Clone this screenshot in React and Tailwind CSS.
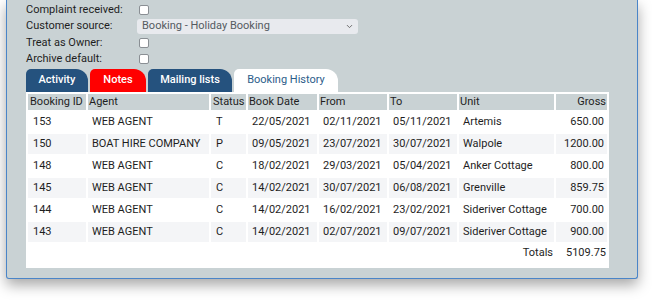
import { ChevronDown } from 'lucide-react';

const rows = [
  { id: '153', agent: 'WEB AGENT', status: 'T', booked: '22/05/2021', from: '02/11/2021', to: '05/11/2021', unit: 'Artemis', gross: '650.00' },
  { id: '150', agent: 'BOAT HIRE COMPANY', status: 'P', booked: '09/05/2021', from: '23/07/2021', to: '30/07/2021', unit: 'Walpole', gross: '1200.00' },
  { id: '148', agent: 'WEB AGENT', status: 'C', booked: '18/02/2021', from: '29/03/2021', to: '05/04/2021', unit: 'Anker Cottage', gross: '800.00' },
  { id: '145', agent: 'WEB AGENT', status: 'C', booked: '14/02/2021', from: '30/07/2021', to: '06/08/2021', unit: 'Grenville', gross: '859.75' },
  { id: '144', agent: 'WEB AGENT', status: 'C', booked: '14/02/2021', from: '16/02/2021', to: '23/02/2021', unit: 'Sideriver Cottage', gross: '700.00' },
  { id: '143', agent: 'WEB AGENT', status: 'C', booked: '14/02/2021', from: '02/07/2021', to: '09/07/2021', unit: 'Sideriver Cottage', gross: '900.00' },
];

const Checkbox = () => (
  <span className="block w-[10px] h-[10px] bg-white border border-[#8a8f94] rounded-[2px]"></span>
);

const App = () => {
  return (
    <div className="min-h-screen bg-white font-['Roboto',sans-serif] text-[11px] text-[#1e1e1e]">
      <div className="ml-[6px] w-[632px] h-[279px] bg-[#c9d2d4] border-x border-b border-[#4a85c8] rounded-b-[3px] shadow-[0_6px_14px_rgba(0,0,0,0.35)] pl-[19px] pt-[2px]">
        {/* Form fields */}
        <div className="grid grid-cols-[111px_auto] items-center">
          <div className="h-[16px] flex items-center">Complaint received:</div>
          <div className="flex items-center pl-[2px]"><Checkbox /></div>

          <div className="h-[17px] flex items-center">Customer source:</div>
          <div className="h-[17px] flex items-center">
            <div className="w-[221px] h-[15px] bg-[#e8eaee] rounded-[3px] flex items-center justify-between pl-[5px] pr-[4px] text-[#555b61]">
              <span>Booking - Holiday Booking</span>
              <ChevronDown className="w-[9px] h-[9px] text-[#666]" strokeWidth={2.5} />
            </div>
          </div>

          <div className="h-[16px] flex items-center">Treat as Owner:</div>
          <div className="flex items-center pl-[2px]"><Checkbox /></div>

          <div className="h-[16px] flex items-center">Archive default:</div>
          <div className="flex items-center pl-[2px]"><Checkbox /></div>
        </div>

        {/* Tabs */}
        <div className="mt-[2px] flex gap-[2px] h-[23px] items-end">
          <div className="w-[62px] h-[23px] bg-[#25527e] text-white font-medium rounded-tl-[5px] rounded-tr-[12px] flex items-center justify-center">Activity</div>
          <div className="w-[56px] h-[23px] bg-[#ff0000] text-white font-medium rounded-tl-[5px] rounded-tr-[12px] flex items-center justify-center">Notes</div>
          <div className="w-[84px] h-[23px] bg-[#25527e] text-white font-medium rounded-tl-[5px] rounded-tr-[12px] flex items-center justify-center">Mailing lists</div>
          <div className="w-[104px] h-[23px] bg-white text-[#2c5d8a] rounded-tl-[5px] rounded-tr-[12px] flex items-center justify-center">Booking History</div>
        </div>

        {/* Booking history table */}
        <div className="w-[583px] h-[176px] bg-white">
          <table className="table-fixed border-separate border-spacing-[2px] w-[583px]">
            <thead>
              <tr className="h-[16px] text-left">
                <th className="w-[58px] bg-[#c9d2d4] font-normal pl-[2px] leading-[16px]">Booking ID</th>
                <th className="w-[121px] bg-[#c9d2d4] font-normal pl-[1px] leading-[16px]">Agent</th>
                <th className="w-[35px] bg-[#c9d2d4] font-normal pl-[2px] leading-[16px]">Status</th>
                <th className="w-[69px] bg-[#c9d2d4] font-normal pl-[1px] leading-[16px]">Book Date</th>
                <th className="w-[68px] bg-[#c9d2d4] font-normal pl-[1px] leading-[16px]">From</th>
                <th className="w-[68px] bg-[#c9d2d4] font-normal pl-[1px] leading-[16px]">To</th>
                <th className="w-[95px] bg-[#c9d2d4] font-normal pl-[1px] leading-[16px]">Unit</th>
                <th className="bg-[#c9d2d4] font-normal pr-[1px] text-right leading-[16px]">Gross</th>
              </tr>
            </thead>
            <tbody>
              {rows.map((r, i) => (
                <tr key={r.id} className={i % 2 === 1 ? 'h-[20px] bg-[#f4f5f7]' : 'h-[20px] bg-white'}>
                  <td className="pl-[5px]">{r.id}</td>
                  <td className="pl-[4px]">{r.agent}</td>
                  <td className="pl-[5px]">{r.status}</td>
                  <td className="pl-[4px]">{r.booked}</td>
                  <td className="pl-[4px]">{r.from}</td>
                  <td className="pl-[4px]">{r.to}</td>
                  <td className="pl-[4px]">{r.unit}</td>
                  <td className="pr-[3px] text-right">{r.gross}</td>
                </tr>
              ))}
              <tr className="h-[18px]">
                <td colSpan={6}></td>
                <td className="pr-[1px] text-right">Totals</td>
                <td className="pr-[1px] text-right">5109.75</td>
              </tr>
            </tbody>
          </table>
        </div>
      </div>
    </div>
  );
};

export default App;
